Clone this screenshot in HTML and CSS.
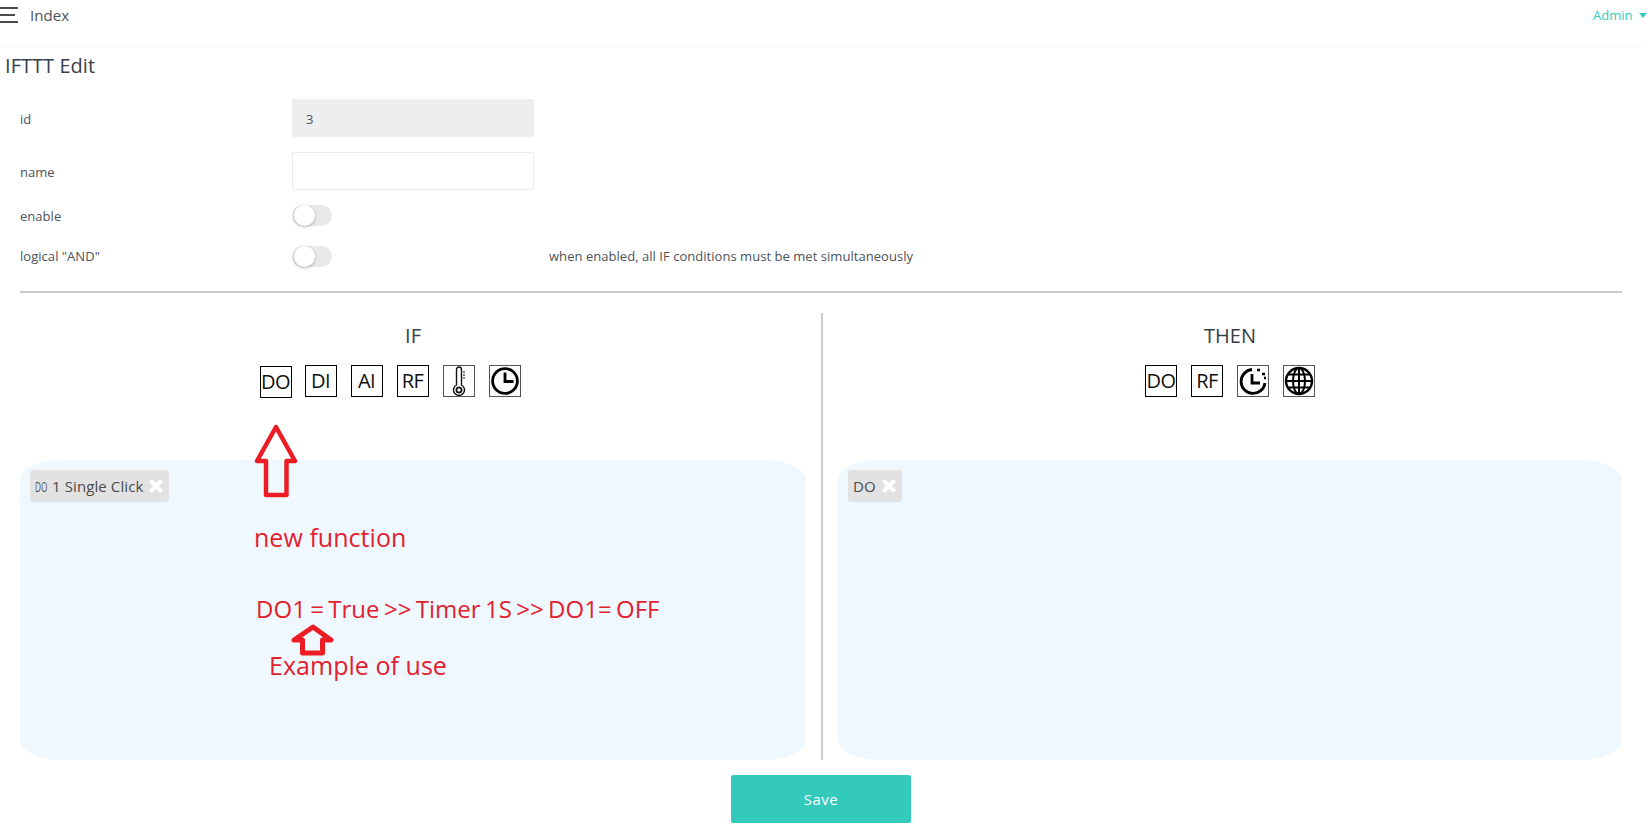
FILE: index.html
```html
<!DOCTYPE html>
<html lang="en">
<head>
<meta charset="utf-8">
<title>IFTTT Edit</title>
<link rel="stylesheet" href="styles.css">
</head>
<body>
<header class="topbar">
  <div class="topbar-left">
    <span class="burger"><i class="b-line"></i><i class="b-line b-short"></i><i class="b-line"></i></span>
    <span class="crumb">Index</span>
  </div>
  <div class="user">Admin <span class="caret"></span></div>
</header>
<main class="page">
  <h1 class="title">IFTTT Edit</h1>
  <form class="form">
    <div class="row row-input row-id">
      <label class="label">id</label>
      <div class="input input-disabled">3</div>
    </div>
    <div class="row row-input row-name">
      <label class="label">name</label>
      <div class="input"></div>
    </div>
    <div class="row row-switch">
      <label class="label">enable</label>
      <span class="switch"><span class="knob"></span></span>
    </div>
    <div class="row row-switch row-and">
      <label class="label">logical "AND"</label>
      <span class="switch"><span class="knob"></span></span>
      <span class="hint">when enabled, all IF conditions must be met simultaneously</span>
    </div>
  </form>
  <div class="rule"></div>
  <section class="columns">
    <div class="col col-if">
      <h2 class="col-title">IF</h2>
      <div class="icons icons-if">
        <span class="ico ico-first">DO</span>
        <span class="ico">DI</span>
        <span class="ico">AI</span>
        <span class="ico">RF</span>
        <span class="ico ico-svg">
          <svg width="30" height="30" viewBox="0 0 30 30" fill="none" stroke="#111" stroke-width="1.400">
            <path d="M12.500 3.500a2.500 2.500 0 0 1 5 0v15.500a5.500 5.500 0 1 1-5 0z"/>
            <circle cx="15" cy="24" r="2.600" stroke-width="1.800"/>
            <path d="M19 6h2M19 9h2M19 12h2" stroke-width="1"/>
          </svg>
        </span>
        <span class="ico ico-svg">
          <svg width="30" height="30" viewBox="0 0 30 30" fill="none" stroke="#000" stroke-width="2.800">
            <circle cx="15" cy="15" r="12.400"/>
            <path d="M15 6.500v9h8.500"/>
          </svg>
        </span>
      </div>
      <div class="panel">
        <span class="tag"><span class="tag-img">DO</span>1 Single Click<span class="tag-x"></span></span>
      </div>
      <svg class="note-arrow note-arrow-big" width="46" height="74" viewBox="0 0 46 74" fill="none" stroke="#ed1c24" stroke-width="4.500" stroke-linejoin="round">
        <path d="M22 3 41 37H32.500V71H12V37H3z"/>
      </svg>
      <svg class="note-arrow note-arrow-small" width="44" height="32" viewBox="0 0 44 32" fill="none" stroke="#ed1c24" stroke-width="5" stroke-linejoin="round">
        <path d="M22 3 40 16H31.500V29H11.500V16H3z"/>
      </svg>
      <p class="note note-new">new function</p>
      <p class="note note-do">DO1 = True &gt;&gt; Timer 1S &gt;&gt; DO1= OFF</p>
      <p class="note note-ex">Example of use</p>
    </div>
    <div class="divider"></div>
    <div class="col">
      <h2 class="col-title">THEN</h2>
      <div class="icons">
        <span class="ico">DO</span>
        <span class="ico">RF</span>
        <span class="ico ico-svg">
          <svg width="30" height="30" viewBox="0 0 30 30" fill="none" stroke="#000" stroke-width="2.800">
            <path d="M14 3.500A12 12 0 1 0 27 17"/>
            <path d="M14 8v9h8"/>
            <path d="M19 4h3M24 8h3M26 12h2" stroke-width="2.400"/>
          </svg>
        </span>
        <span class="ico ico-svg">
          <svg width="30" height="30" viewBox="0 0 30 30" fill="none" stroke="#000" stroke-width="2">
            <circle cx="15" cy="15" r="13" stroke-width="2.400"/>
            <ellipse cx="15" cy="15" rx="6" ry="13"/>
            <path d="M15 2v26M2 15h26M4 8.500h22M4 21.500h22"/>
          </svg>
        </span>
      </div>
      <div class="panel">
        <span class="tag">DO<span class="tag-x"></span></span>
      </div>
    </div>
  </section>
  <div class="actions"><button type="button" class="save">Save</button></div>
</main>
</body>
</html>
```
FILE: styles.css
```css
* { box-sizing: border-box; }
html, body { margin: 0; padding: 0; }
body {
  height: 830px;
  overflow: hidden;
  background: #fff;
  color: #4d5259;
  font-family: "Open Sans", "Noto Sans", sans-serif;
  font-size: 13px;
  letter-spacing: .04px;
}
.topbar {
  height: 47px;
  display: flex;
  justify-content: space-between;
  border-bottom: 1px solid #f5f6f7;
}
.topbar-left { display: flex; align-items: flex-start; }
.burger {
  width: 18px;
  margin-top: 7px;
  display: flex;
  flex-direction: column;
  gap: 5px;
}
.b-line { display: block; height: 2px; background: #4a4a4a; }
.b-short { width: 15px; }
.crumb { margin: 5px 0 0 12px; font-size: 15px; line-height: 20px; }
.user { color: #33cabb; margin-top: 6px; line-height: 18px; white-space: nowrap; }
.caret {
  display: inline-block;
  margin-left: 3px;
  vertical-align: 2px;
  border-top: 5px solid #33cabb;
  border-left: 4.500px solid transparent;
  border-right: 4.500px solid transparent;
}
.page { padding: 0 25px 0 20px; }
.title {
  margin: 6px 0 21px -15px;
  font-size: 20px;
  line-height: 25px;
  font-weight: 400;
  color: #37404a;
}
.row { display: flex; align-items: center; }
.label { width: 272px; flex: none; }
.row-input { height: 38px; margin-bottom: 15px; }
.row-input .label { padding-top: 2px; }
.row-switch { height: 21px; margin-bottom: 20px; }
.row-and { margin-bottom: 0; }
.row-and .label, .hint { padding-bottom: 1px; }
.input {
  width: 242px;
  height: 38px;
  padding: 0 13px;
  line-height: 38px;
  border: 1px solid #ebebeb;
  border-radius: 2px;
  background: #fff;
}
.input-disabled { background: #eee; border-color: #eee; }
.switch {
  position: relative;
  width: 40px;
  height: 21px;
  flex: none;
  border-radius: 11px;
  background: #e9e9e9;
}
.knob {
  position: absolute;
  left: 2px;
  top: 0;
  width: 21px;
  height: 21px;
  border-radius: 50%;
  background: #fff;
  box-shadow: 0 1px 3px rgba(0, 0, 0, .3);
}
.hint { margin-left: 217px; }
.rule { height: 2px; margin-top: 24px; background: #ccc; }
.columns {
  display: grid;
  grid-template-columns: 786px 2px 1fr;
  column-gap: 15px;
  margin-top: 20px;
}
.col { position: relative; min-width: 0; }
.col-title {
  margin: 0;
  height: 44px;
  padding-top: 1px;
  font-size: 20px;
  font-weight: 400;
  line-height: 44px;
  text-align: center;
  color: #37404a;
}
.icons {
  display: flex;
  justify-content: center;
  gap: 14px;
  height: 32px;
  margin: 8px 0 63px;
}
.icons-if { padding-right: 46px; }
.ico {
  width: 32px;
  height: 32px;
  border: 1px solid #000;
  color: #111;
  font-size: 20px;
  line-height: 30px;
  text-align: center;
  letter-spacing: -.5px;
}
.ico-first { margin-top: 1px; margin-right: -1px; }
.ico-svg { border-color: #555; display: flex; }
.panel {
  height: 300px;
  padding: 10px;
  background: #f0f8ff;
  border-radius: 42px / 20px;
}
.tag {
  display: inline-flex;
  align-items: center;
  height: 32px;
  padding: 0 5px 0 5px;
  background: #e2e2e2;
  border-radius: 3px;
  font-size: 15px;
  letter-spacing: .1px;
  color: #4a4a4a;
}
.tag-img {
  display: inline-block;
  width: 14px;
  margin-right: 3px;
  transform: scaleX(.55);
  transform-origin: left center;
  color: #555;
  white-space: nowrap;
}
.tag-x {
  position: relative;
  width: 16px;
  height: 16px;
  margin-left: 5px;
}
.tag-x::before, .tag-x::after {
  content: "";
  position: absolute;
  left: 6px;
  top: 0;
  width: 4px;
  height: 16px;
  background: #fff;
}
.tag-x::before { transform: rotate(45deg); }
.tag-x::after { transform: rotate(-45deg); }
.divider { background: #ccc; }
.note-arrow { position: absolute; }
.note-arrow-big { left: 234px; top: 111px; }
.note-arrow-small { left: 271px; top: 311px; }
.note {
  position: absolute;
  margin: 0;
  color: #e2202e;
  white-space: nowrap;
  line-height: 34px;
  font-size: 25px;
}
.note-new { left: 234px; top: 207px; }
.note-do { left: 236px; top: 279px; font-size: 24px; word-spacing: -2px; }
.note-ex { left: 249px; top: 335px; }
.actions { display: flex; justify-content: center; margin-top: 15px; }
.save {
  width: 180px;
  height: 48px;
  padding-bottom: 2px;
  border: 0;
  border-radius: 2px;
  background: #33cabb;
  color: #fff;
  font: 15px/46px "Open Sans", sans-serif;
  letter-spacing: .5px;
}
```
